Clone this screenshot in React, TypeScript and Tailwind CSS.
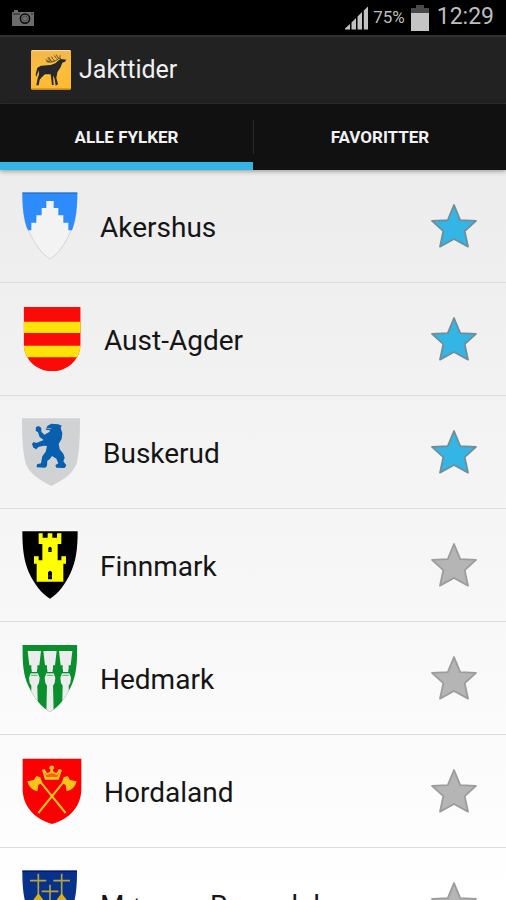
import { useState } from "react";
import type { ReactNode } from "react";

type TCounty = {
  id: string;
  name: string;
  shield: ReactNode;
};

const counties: TCounty[] = [
  {
    id: "akershus",
    name: "Akershus",
    shield: (
      <svg width="56" height="68" viewBox="36 36 168 204">
        <path
          d="M38 39H201C201 90 197 130 182 154C166 192 144 222 120 237C96 222 73 192 57 154C42 130 38 90 38 39Z"
          fill="#f3f3f3"
          stroke="#d4d4d4"
          strokeWidth="3"
        />
        <path
          d="M37 38H202C202 82 198 120 186 151H175V128H160V106H145V84H131V63H109V84H95V106H79V128H64V151H54C41 120 37 82 37 38Z"
          fill="#2e8bfb"
        />
        <path d="M37 39H202" stroke="#1268cc" strokeWidth="3" />
      </svg>
    ),
  },
  {
    id: "aust-agder",
    name: "Aust-Agder",
    shield: (
      <svg width="60" height="68" viewBox="36 30 180 204">
        <clipPath id="agder">
          <path d="M41 36H212V144C212 194 172 229 127 229C80 229 41 194 41 144Z" />
        </clipPath>
        <g clipPath="url(#agder)">
          <path d="M36 30H216V234H36Z" fill="#fb0b08" />
          <path d="M36 80H216V114H36ZM36 152H216V187H36Z" fill="#ffe208" />
        </g>
      </svg>
    ),
  },
  {
    id: "buskerud",
    name: "Buskerud",
    shield: (
      <svg width="59" height="68" viewBox="36 38 177 204">
        <path
          d="M36 39H210C210 95 208 145 199 177C187 207 158 225 124 242C88 225 60 206 48 177C38 145 36 95 36 39Z"
          fill="#d1d2d4"
        />
        <path
          d="M112 62L124 55L145 57L155 61L152 68L157 84L155 100L146 116L149 132L160 145L164 157L160 168L169 180L164 188L139 187L136 180L145 174L139 160L126 152L119 162L112 166L111 181L106 187L80 186L81 177L93 174L97 153L107 139L111 122L101 121L85 125L79 132L70 127L66 116L71 110L79 113L101 104L89 95L84 81L77 76L78 65L86 62L94 68L94 79L103 88L118 80L120 75L107 73Z"
          fill="#075fae"
        />
        <path d="M110 69L124 70" stroke="#d1d2d4" strokeWidth="2" />
      </svg>
    ),
  },
  {
    id: "finnmark",
    name: "Finnmark",
    shield: (
      <svg width="56" height="68" viewBox="36 33 168 204">
        <path
          d="M37 34H203C203 85 198 125 182 158C166 192 146 220 120 236C94 220 73 192 57 158C42 125 37 85 37 34Z"
          fill="#000"
        />
        <path
          d="M86 40H98V53H113V40H127V53H141V40H154V72H143V121H154V109H168V131H160V185H80V131H72V109H86V121H97V72H86Z"
          fill="#ffff00"
        />
        <path
          d="M115 96V84Q120 76 125 84V96ZM114 178V157Q120 147 126 157V178Z"
          fill="#000"
        />
        <path d="M115 91H125M114 168H126" stroke="#6e6e00" strokeWidth="2" />
      </svg>
    ),
  },
  {
    id: "hedmark",
    name: "Hedmark",
    shield: (
      <svg width="56" height="68" viewBox="36 27 168 204">
        <clipPath id="hedmark">
          <path d="M37 30H202C202 82 199 122 184 152C168 188 146 216 120 231C94 216 71 188 55 152C40 122 37 82 37 30Z" />
        </clipPath>
        <g clipPath="url(#hedmark)">
          <path d="M36 27H204V231H36Z" fill="#0a8f2f" />
          {[73, 120, 167].map((x) => (
            <g key={x} transform={`translate(${x} 0)`} fill="#ececec">
              <path d="M-20 48H20L15 91H9V101Q7 106 8 111H-8Q-7 106-9 101V91H-15Z" />
              <path d="M-11 115H11L16 128L14 144L9 152L11 231H-11L-9 152L-14 144L-16 128Z" />
              <path
                d="M-8 113H8M-10 121H10"
                stroke="#0a8f2f"
                strokeWidth="2"
              />
            </g>
          ))}
        </g>
      </svg>
    ),
  },
  {
    id: "hordaland",
    name: "Hordaland",
    shield: (
      <svg width="60" height="68" viewBox="36 36 180 204">
        <path
          d="M38 41H214V132C214 185 177 222 126 237C75 222 38 185 38 132Z"
          fill="#fb0000"
        />
        <path
          d="M80 97L167 204M172 97L85 204"
          fill="none"
          stroke="#f8c51c"
          strokeWidth="6"
        />
        <g fill="#f8c51c">
          <path d="M52 109L72 105L79 93L91 97L97 113L85 120L82 139Q58 134 52 109Z" />
          <path d="M200 109L180 105L173 93L161 97L155 113L167 120L170 139Q194 134 200 109Z" />
          <path d="M105 104L96 75L104 72L111 84L119 82L122 74L117 70L121 62H130L133 70L128 74L132 82L140 84L147 72L156 75L146 104Z" />
        </g>
        <path
          d="M104 80L109 96H142L148 80L141 90L126 84L110 90Z"
          fill="#fb0000"
          opacity="0.5"
        />
      </svg>
    ),
  },
  {
    id: "more-og-romsdal",
    name: "Møre og Romsdal",
    shield: (
      <svg width="56" height="68" viewBox="66 90 168 204">
        <path
          d="M67 92H231C231 145 227 182 212 215C196 250 174 278 149 293C123 278 102 250 86 215C71 182 67 145 67 92Z"
          fill="#08318a"
        />
        <path d="M67 93H231" stroke="#000068" strokeWidth="3" />
        <g stroke="#b3a23f" strokeWidth="5">
          <path d="M115 101V170M90 122H139M185 101V170M160 122H210M150 134V205M125 154H175" />
        </g>
        <path
          d="M115 160L132 182H98ZM185 160L202 182H168ZM150 200L168 222H132Z"
          fill="#d8b01c"
        />
      </svg>
    ),
  },
];

function StarIcon({ active }: { active: boolean }) {
  return (
    <svg width="48" height="48" viewBox="0 0 48 48">
      <path
        d="M24 3L30.2 18.2L46 18.9L34.7 29.2L38 44.6L24 37L10 44.6L13.3 29.2L2 18.9L17.8 18.2Z"
        fill={active ? "#33b5e5" : "#b5b5b5"}
        stroke={active ? "#6f8e99" : "#9c9c9c"}
        strokeWidth="1.8"
        strokeLinejoin="round"
      />
    </svg>
  );
}

function StatusBar() {
  return (
    <div className="flex h-[35px] shrink-0 items-center justify-between bg-black px-3 text-[#bebebe]">
      <svg width="22" height="16" viewBox="0 0 22 16">
        <path d="M0 2H2V0H6V2H22V16H0Z" fill="#6c6c6c" />
        <path d="M1 4H8M19 4H21" stroke="#222" strokeWidth="1" />
        <circle cx="13" cy="8.6" r="4.6" fill="#777" stroke="#0a0a0a" strokeWidth="1.5" />
        <circle cx="13" cy="8.6" r="2.6" fill="#6c6c6c" stroke="#333" strokeWidth="0.6" />
      </svg>
      <div className="flex items-center">
        <svg width="24" height="24" viewBox="0 0 24 24">
          <path
            d="M0 23.5V22.5L5 18V23.5ZM6.5 23.5V16.5L11 12V23.5ZM12.5 23.5V10.5L17 6V23.5ZM18.8 23.5V4.5L23 0.5V23.5Z"
            fill="#c2c2c2"
          />
        </svg>
        <span className="ml-1 text-[17px]">75%</span>
        <svg className="ml-1.5" width="18" height="26" viewBox="0 0 18 26">
          <path d="M5 0H13V3H18V9H0V3H5Z" fill="#4a4a4a" />
          <path d="M0 8H18V26H0Z" fill="#c4c4c4" />
        </svg>
        <span className="ml-2 text-[23px]">12:29</span>
      </div>
    </div>
  );
}

function AppIcon() {
  return (
    <svg width="42" height="42" viewBox="0 0 126 126">
      <defs>
        <linearGradient id="amber" x1="0" y1="0" x2="0" y2="1">
          <stop offset="0" stopColor="#f2b64c" />
          <stop offset="0.5" stopColor="#fdbd3c" />
          <stop offset="1" stopColor="#ffb92e" />
        </linearGradient>
      </defs>
      <rect x="3" y="3" width="120" height="119" rx="4" fill="url(#amber)" />
      <path d="M6 5H120" stroke="#ffe0a0" strokeWidth="3" />
      <path d="M4 120H122" stroke="#b87d18" strokeWidth="3" />
      <path
        d="M109 32L105 38L97 41L91 56L82 70L81 77L79 86L84 106L77 110L74 90L69 79L71 108L66 108L62 76L45 76L36 84L29 92L26 109L19 109L23 88L27 76L26 64L22 76L19 84L17 76L22 56L33 50L62 48L76 43L86 34L93 30Z"
        fill="#25272a"
      />
      <path
        d="M92 31Q82 29 79 18M92 31Q88 25 90 20M85 30Q66 44 50 38M74 36Q67 32 65 24M66 38Q58 34 53 28M59 38Q52 36 48 32M62 33L56 25M79 28L73 20"
        fill="none"
        stroke="#4a3d25"
        strokeWidth="2.5"
        strokeLinecap="round"
      />
    </svg>
  );
}

const tabs = ["ALLE FYLKER", "FAVORITTER"];

export default function App() {
  const [activeTab, setActiveTab] = useState(0);
  const [favorites, setFavorites] = useState<string[]>([
    "akershus",
    "aust-agder",
    "buskerud",
  ]);

  const toggleFavorite = (id: string) => {
    setFavorites((prev) =>
      prev.includes(id) ? prev.filter((f) => f !== id) : [...prev, id]
    );
  };

  const visible =
    activeTab === 0
      ? counties
      : counties.filter((county) => favorites.includes(county.id));

  return (
    <div className="flex h-screen flex-col overflow-hidden bg-linear-to-b from-[#e8e8e8] to-white font-[Roboto,sans-serif]">
      <StatusBar />

      <header className="flex h-[69px] shrink-0 items-center border-t-2 border-b border-t-[#323232] border-b-[#303030] bg-[#222222] pl-[30px]">
        <AppIcon />
        <h1 className="ml-[7px] text-[25px] text-[#f0f0f0]">Jakttider</h1>
      </header>

      <nav className="relative flex h-[66px] shrink-0 items-center bg-[#111111] shadow-[0_1px_5px_rgba(0,0,0,0.4)]">
        {tabs.map((tab, index) => (
          <button
            key={tab}
            type="button"
            onClick={() => setActiveTab(index)}
            className={`flex h-full flex-1 items-center border-b-8 pt-2 text-[17px] font-bold text-[#f2f2f2] ${
              activeTab === index ? "border-[#33b5e5]" : "border-transparent"
            }`}
          >
            <span
              className={`flex h-[34px] flex-1 items-center justify-center pt-0.5 ${
                index > 0 ? "border-l border-[#2c2c2c]" : ""
              }`}
            >
              {tab}
            </span>
          </button>
        ))}
      </nav>

      <ul className="min-h-0 flex-1 overflow-hidden">
        {visible.map((county) => (
          <li
            key={county.id}
            className="flex h-[113px] items-center border-b border-[#dcdcdc] pr-7 pl-[22px]"
          >
            <a
              href={`#${county.id}`}
              className="flex flex-1 items-center gap-[22px] text-[28px] text-[#151515]"
            >
              {county.shield}
              <span className="pt-1">{county.name}</span>
            </a>
            <button
              type="button"
              aria-label={`Favoritt ${county.name}`}
              aria-pressed={favorites.includes(county.id)}
              onClick={() => toggleFavorite(county.id)}
            >
              <StarIcon active={favorites.includes(county.id)} />
            </button>
          </li>
        ))}
      </ul>
    </div>
  );
}
